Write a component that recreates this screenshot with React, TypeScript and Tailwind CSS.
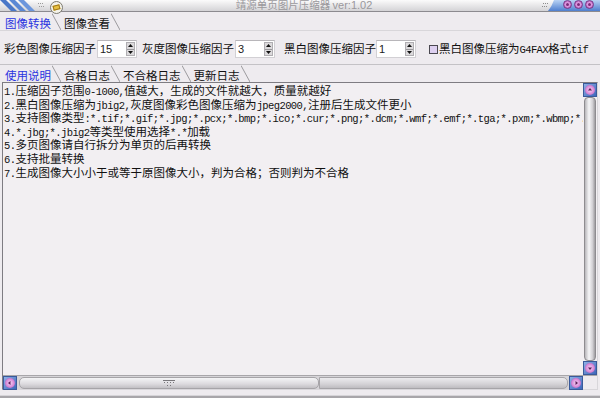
import React from "react";

const lines = [
  "1.压缩因子范围0-1000,值越大，生成的文件就越大，质量就越好",
  "2.黑白图像压缩为jbig2,灰度图像彩色图像压缩为jpeg2000,注册后生成文件更小",
  "3.支持图像类型:*.tif;*.gif;*.jpg;*.pcx;*.bmp;*.ico;*.cur;*.png;*.dcm;*.wmf;*.emf;*.tga;*.pxm;*.wbmp;*.jp2;*.j2k",
  "4.*.jbg;*.jbig2等类型使用选择*.*加载",
  "5.多页图像请自行拆分为单页的后再转换",
  "6.支持批量转换",
  "7.生成图像大小小于或等于原图像大小，判为合格；否则判为不合格",
];

// half-width runs are drawn narrower, like the old bitmap font
const MixedText = ({text}: {text: string}) => {
  const parts = text.split(/([\u0000-\u00ff]+)/).filter((p) => p !== "");
  return (
    <>
      {parts.map((p, i) =>
        /^[\u0000-\u00ff]+$/.test(p) ? (
          <span key={i} className="font-['Liberation_Mono'] text-[10.5px] tracking-[-0.6px]">{p}</span>
        ) : (
          <span key={i}>{p}</span>
        )
      )}
    </>
  );
};

const Tab = ({label, active}: {label: string; active?: boolean}) => (
  <div className="flex items-end h-full">
    <span className={active ? "pl-[3px] pr-[1px] pb-[1px] text-[#2b34e0]" : "pl-[3px] pr-[1px] pb-[1px] text-[#111]"}>{label}</span>
    <svg width="9" height="17" viewBox="0 0 9 17" className="shrink-0">
      <line x1="0" y1="0.5" x2="9" y2="17" stroke="#9c9a9e" strokeWidth="1"/>
    </svg>
  </div>
);

const Spin = ({value}: {value: string}) => (
  <div className="flex items-center w-[40px] h-[18px] bg-white border border-[#d2d0d4] border-t-[#b8b6ba]">
    <span className="flex-1 pl-[2px] font-['Liberation_Sans'] text-[11px] text-[#222]">{value}</span>
    <div className="flex flex-col w-[9px] h-[14px] mr-[1px] bg-[#dcdadc] border border-[#b0aeb2]">
      <div className="flex-1 flex items-center justify-center">
        <svg width="5" height="3" viewBox="0 0 5 3"><polygon points="2.5,0 5,3 0,3" fill="#111"/></svg>
      </div>
      <div className="h-px bg-[#9a989c]"/>
      <div className="flex-1 flex items-center justify-center">
        <svg width="5" height="3" viewBox="0 0 5 3"><polygon points="0,0 5,0 2.5,3" fill="#111"/></svg>
      </div>
    </div>
  </div>
);

const ScrollBtn = ({dir}: {dir: "up" | "down" | "left" | "right"}) => {
  const pts = {
    up: "3,5.5 7,5.5 5,3",
    down: "3,4.5 7,4.5 5,7",
    left: "5.5,3 5.5,7 3,5",
    right: "4.5,3 4.5,7 7,5",
  }[dir];
  return (
    <div className="w-[14px] h-[14px] shrink-0 flex items-center justify-center bg-[linear-gradient(135deg,#8fb0e6,#3d66bb)] border border-[#3a5a9a]">
      <div className="w-[10px] h-[10px] rounded-full bg-[radial-gradient(circle,#f4d6f4_0%,#d88ad8_55%,#a04aa8_100%)] flex items-center justify-center">
        <svg width="10" height="10" viewBox="0 0 10 10"><polygon points={pts} fill="#5a1a5a"/></svg>
      </div>
    </div>
  );
};

const TitleButton = () => (
  <div className="w-[9px] h-[9px] rounded-full bg-[radial-gradient(circle,#f6d8f6_0%,#d68ad8_50%,#9a3c9e_100%)] border border-[#7a3a8a] flex items-center justify-center">
    <div className="w-[3px] h-[3px] rounded-full bg-[#7a2a7a]"/>
  </div>
);

export default function App() {
  return (
    <div className="w-[600px] h-[398px] overflow-hidden flex flex-col bg-[#eeebef] font-['Noto_Sans_CJK_SC',sans-serif] text-[11.5px] text-[#111] leading-none">
      {/* title bar */}
      <div className="relative h-[12px] shrink-0 bg-[linear-gradient(#fbfbfb,#d4d3d6)] border-b border-[#8c8a8f]">
        <svg width="48" height="11" viewBox="0 0 48 11" className="absolute left-0 top-0">
          <polygon points="0,0 6,0 17,11 11,11" fill="#4a78c8"/>
          <polygon points="9,0 15,0 26,11 20,11" fill="#5a88d4"/>
          <polygon points="18,0 24,0 35,11 29,11" fill="#6c96dc"/>
          <g fill="#9a9a9a">
            <rect x="38" y="3" width="1" height="1"/><rect x="40" y="3" width="1" height="1"/><rect x="42" y="3" width="1" height="1"/>
            <rect x="39" y="6" width="1" height="1"/><rect x="41" y="6" width="1" height="1"/><rect x="43" y="6" width="1" height="1"/>
          </g>
        </svg>
        <div className="absolute left-[50px] top-[1px] w-[13px] h-[13px] rounded-full bg-[#f4f2ea] border border-[#7c7a70] flex items-center justify-center">
          <div className="w-[7px] h-[5px] bg-[#e8c040] border border-[#a07818] rotate-[-15deg]"/>
        </div>
        <div className="absolute inset-0 flex items-center justify-center pl-[8px]">
          <span className="text-[10.5px] text-[#9a989c]">靖源单页图片压缩器 <span className="font-['Liberation_Sans'] text-[11px]">ver:1.02</span></span>
        </div>
        <svg width="60" height="11" viewBox="0 0 60 11" className="absolute right-0 top-0">
          <defs>
            <linearGradient id="tb" x1="0" y1="0" x2="0" y2="1">
              <stop offset="0" stopColor="#b8d2f4"/>
              <stop offset="1" stopColor="#4f7fcf"/>
            </linearGradient>
          </defs>
          <path d="M14,0 L60,0 L60,11 L8,11 Q12,6 14,0 Z" fill="url(#tb)"/>
          <g fill="#8c8c8c">
            <rect x="3" y="3" width="1" height="1"/><rect x="5" y="3" width="1" height="1"/><rect x="7" y="3" width="1" height="1"/>
            <rect x="2" y="6" width="1" height="1"/><rect x="4" y="6" width="1" height="1"/><rect x="6" y="6" width="1" height="1"/>
          </g>
        </svg>
        <div className="absolute right-[6px] top-[0px] flex gap-[2px]">
          <TitleButton/><TitleButton/><TitleButton/>
        </div>
      </div>

      {/* main tabs */}
      <div className="h-[18px] shrink-0 flex pl-[2px]">
        <Tab label="图像转换" active/>
        <Tab label="图像查看"/>
      </div>
      <div className="h-px bg-[#d8d6da] shrink-0"/>

      {/* compression settings */}
      <div className="h-[33px] shrink-0 flex items-center pl-[4px] pt-[3px]">
        <span>彩色图像压缩因子</span>
        <div className="ml-[1px]"><Spin value="15"/></div>
        <span className="ml-[5px]">灰度图像压缩因子</span>
        <div className="ml-[1px]"><Spin value="3"/></div>
        <span className="ml-[9px]">黑白图像压缩因子</span>
        <div className="ml-[0px]"><Spin value="1"/></div>
        <div className="ml-[13px] w-[9px] h-[9px] bg-[#ddd0f0] border border-[#4a4850]"/>
        <span className="ml-[1px]"><MixedText text="黑白图像压缩为G4FAX格式tif"/></span>
      </div>
      <div className="h-px bg-[#c4c2c6] shrink-0"/>

      {/* sub tabs */}
      <div className="h-[17px] shrink-0 flex pl-[2px]">
        <Tab label="使用说明" active/>
        <Tab label="合格日志"/>
        <Tab label="不合格日志"/>
        <Tab label="更新日志"/>
      </div>

      {/* text area */}
      <div className="flex-1 min-h-0 mx-[2px] mb-[5px] flex flex-col border border-[#7e7c82] border-r-[#d8d6da] border-b-[#d8d6da]">
        <div className="flex-1 min-h-0 flex">
          <div className="flex-1 min-w-0 overflow-hidden bg-[#f2eff2] pl-[1px] pt-[2px] leading-[11.6px]">
            {lines.map((l) => (
              <div key={l} className="whitespace-nowrap"><MixedText text={l}/></div>
            ))}
          </div>
          <div className="w-[14px] flex flex-col bg-[#f2eff2]">
            <ScrollBtn dir="up"/>
            <div className="flex-1 mx-[1px] rounded-[4px] border border-[#8e8c90] bg-[linear-gradient(90deg,#b8b6ba,#f6f6f8_40%,#d2d0d4_75%,#9e9ca0)]"/>
            <ScrollBtn dir="down"/>
          </div>
        </div>
        <div className="h-[14px] shrink-0 flex bg-[#d6d4d8] border-t border-[#a8a6aa]">
          <ScrollBtn dir="left"/>
          <div className="flex-1 flex items-center">
            <div className="relative w-[300px] h-[12px] ml-[2px] rounded-[5px] border border-[#a6a4a8] bg-[linear-gradient(#f4f4f6,#dcdade_60%,#c2c0c4)] flex items-center justify-center">
              <svg width="12" height="8" viewBox="0 0 12 8">
                <g fill="#7a787c">
                  <rect x="0" y="1" width="12" height="1"/>
                  <rect x="1" y="3" width="1" height="1"/><rect x="4" y="3" width="1" height="1"/><rect x="7" y="3" width="1" height="1"/><rect x="10" y="3" width="1" height="1"/>
                  <rect x="4" y="6" width="1" height="1"/><rect x="7" y="6" width="1" height="1"/>
                </g>
              </svg>
            </div>
            <div className="flex-1 h-[12px] mr-[1px] rounded-r-[5px] border border-[#a6a4a8] bg-[linear-gradient(#ecebee,#d4d2d6_60%,#bebcc0)]"/>
          </div>
          <ScrollBtn dir="right"/>
          <div className="w-[14px] bg-[#eeebef]"/>
        </div>
      </div>
      <div className="h-[3px] shrink-0 bg-[#a8a6aa] border-t border-[#d6d4d8]"/>
    </div>
  );
}
